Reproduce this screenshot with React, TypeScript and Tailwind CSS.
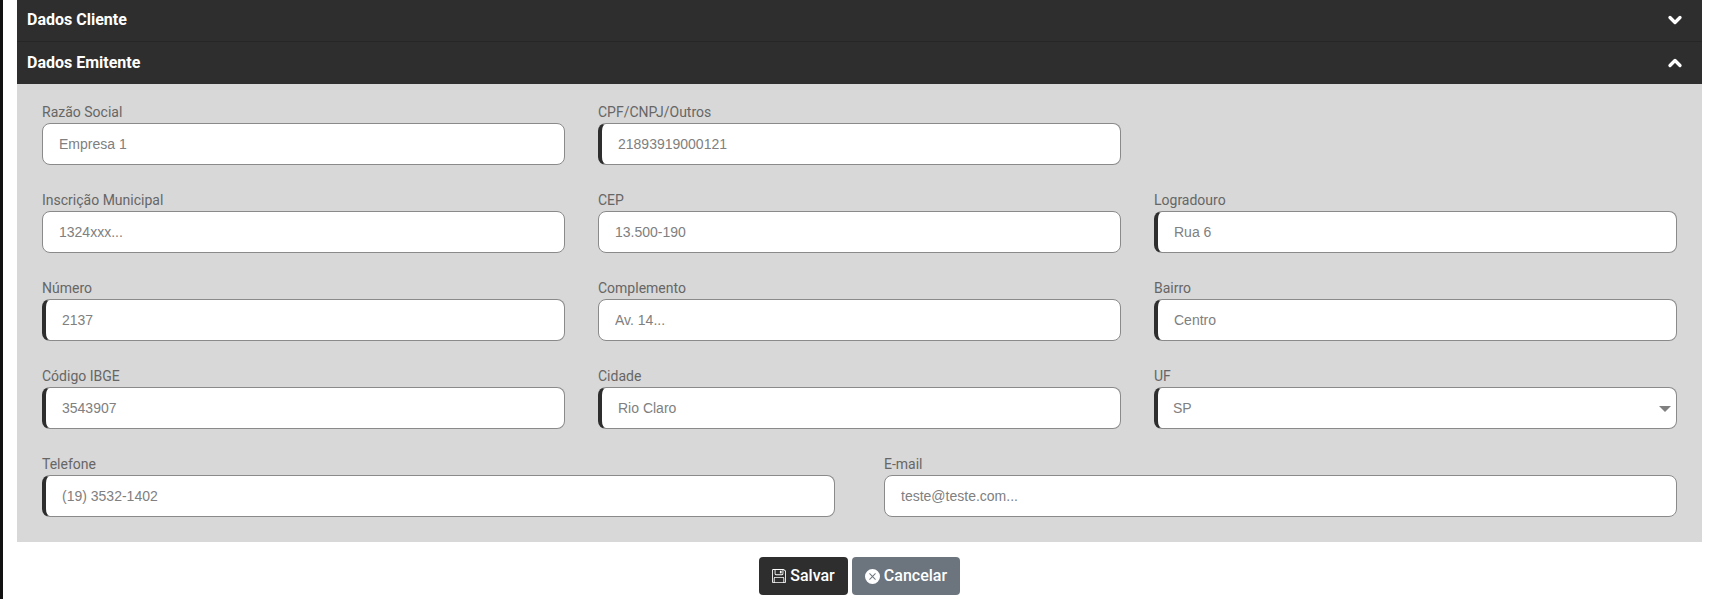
import { ChevronDown, ChevronUp } from "lucide-react";

type FieldProps = {
  label: string;
  value: string;
  required?: boolean;
};

const Field = ({ label, value, required }: FieldProps) => (
  <div className="flex flex-col min-w-0">
    <label className="h-[20px] text-[14px] leading-[18px] text-[#666] font-['Roboto',sans-serif]">
      {label}
    </label>
    <input
      readOnly
      value={value}
      className={`w-full h-[42px] rounded-[8px] border border-[#8a8a8a] bg-white pr-4 text-[14px] text-[#808080] font-['Liberation_Sans',sans-serif] outline-none ${
        required ? "border-l-[4px] border-l-[#2e2e2e] pl-[16px]" : "pl-[16px]"
      }`}
    />
  </div>
);

const SectionHeader = ({ title, open }: { title: string; open?: boolean }) => (
  <div
    className={`flex h-[42px] items-center justify-between bg-[#2e2e2e] pl-[10px] pr-[17px] ${
      open ? "" : "border-b border-[#262626] pb-[1px]"
    }`}
  >
    <span className="text-[16px] font-bold text-white font-['Roboto',sans-serif]">
      {title}
    </span>
    {open ? (
      <ChevronUp className="w-[20px] h-[20px] text-white" strokeWidth={4} />
    ) : (
      <ChevronDown className="w-[20px] h-[20px] text-white" strokeWidth={4} />
    )}
  </div>
);

const App = () => {
  return (
    <div className="flex h-[599px] w-full overflow-hidden bg-white font-['Roboto',sans-serif]">
      <div className="w-[3px] shrink-0 bg-[#111]" />
      <div className="ml-[14px] w-[1685px] shrink-0">
        <SectionHeader title="Dados Cliente" />
        <SectionHeader title="Dados Emitente" open />

        <div className="flex h-[458px] flex-col gap-[26px] bg-[#d8d8d8] pl-[25px] pr-[25px] pt-[19px]">
          <div className="grid grid-cols-3 gap-x-[33px]">
            <Field label="Razão Social" value="Empresa 1" />
            <Field label="CPF/CNPJ/Outros" value="21893919000121" required />
          </div>
          <div className="grid grid-cols-3 gap-x-[33px]">
            <Field label="Inscrição Municipal" value="1324xxx..." />
            <Field label="CEP" value="13.500-190" />
            <Field label="Logradouro" value="Rua 6" required />
          </div>
          <div className="grid grid-cols-3 gap-x-[33px]">
            <Field label="Número" value="2137" required />
            <Field label="Complemento" value="Av. 14..." />
            <Field label="Bairro" value="Centro" required />
          </div>
          <div className="grid grid-cols-3 gap-x-[33px]">
            <Field label="Código IBGE" value="3543907" required />
            <Field label="Cidade" value="Rio Claro" required />
            <div className="flex flex-col min-w-0">
              <label className="h-[20px] text-[14px] leading-[18px] text-[#666]">
                UF
              </label>
              <div className="relative">
                <select
                  defaultValue="SP"
                  className="w-full h-[42px] appearance-none rounded-[8px] border border-[#8a8a8a] border-l-[4px] border-l-[#2e2e2e] bg-white pl-[15px] text-[14px] text-[#808080] font-['Liberation_Sans',sans-serif] outline-none"
                >
                  <option value="SP">SP</option>
                </select>
                <span className="pointer-events-none absolute right-[6px] top-[19px] h-0 w-0 border-x-[6px] border-t-[6px] border-x-transparent border-t-[#808080]" />
              </div>
            </div>
          </div>
          <div className="grid grid-cols-2 gap-x-[49px]">
            <Field label="Telefone" value="(19) 3532-1402" required />
            <Field label="E-mail" value="teste@teste.com..." />
          </div>
        </div>

        <div className="flex justify-center gap-[4px] pt-[15px]">
          <button className="flex h-[38px] w-[89px] items-center justify-center gap-[4px] rounded-[4px] bg-[#2e2e2e] text-[16px] font-medium text-white">
            <svg viewBox="0 0 16 16" className="h-[14px] w-[14px]" fill="currentColor">
              <path d="M11 2H9v3h2V2z" />
              <path d="M1.5 0h11.586a1.5 1.5 0 0 1 1.06.44l1.415 1.414A1.5 1.5 0 0 1 16 2.914V14.5a1.5 1.5 0 0 1-1.5 1.5h-13A1.5 1.5 0 0 1 0 14.5v-13A1.5 1.5 0 0 1 1.5 0zM1 1.5v13a.5.5 0 0 0 .5.5H2v-4.5A1.5 1.5 0 0 1 3.5 9h9a1.5 1.5 0 0 1 1.5 1.5V15h.5a.5.5 0 0 0 .5-.5V2.914a.5.5 0 0 0-.146-.353l-1.415-1.415A.5.5 0 0 0 13.086 1H13v4.5A1.5 1.5 0 0 1 11.5 7h-7A1.5 1.5 0 0 1 3 5.5V1H1.5a.5.5 0 0 0-.5.5zm3-.5v4.5a.5.5 0 0 0 .5.5h7a.5.5 0 0 0 .5-.5V1H4zm9 14v-4.5a.5.5 0 0 0-.5-.5h-9a.5.5 0 0 0-.5.5V15h10z" />
            </svg>
            Salvar
          </button>
          <button className="flex h-[38px] w-[108px] items-center justify-center gap-[4px] rounded-[4px] bg-[#6c757d] text-[16px] font-medium text-white">
            <svg viewBox="0 0 16 16" className="h-[15px] w-[15px]" fill="currentColor">
              <path d="M16 8A8 8 0 1 1 0 8a8 8 0 0 1 16 0zM5.354 4.646a.5.5 0 1 0-.708.708L7.293 8l-2.647 2.646a.5.5 0 0 0 .708.708L8 8.707l2.646 2.647a.5.5 0 0 0 .708-.708L8.707 8l2.647-2.646a.5.5 0 0 0-.708-.708L8 7.293 5.354 4.646z" />
            </svg>
            Cancelar
          </button>
        </div>
      </div>
    </div>
  );
};

export default App;
